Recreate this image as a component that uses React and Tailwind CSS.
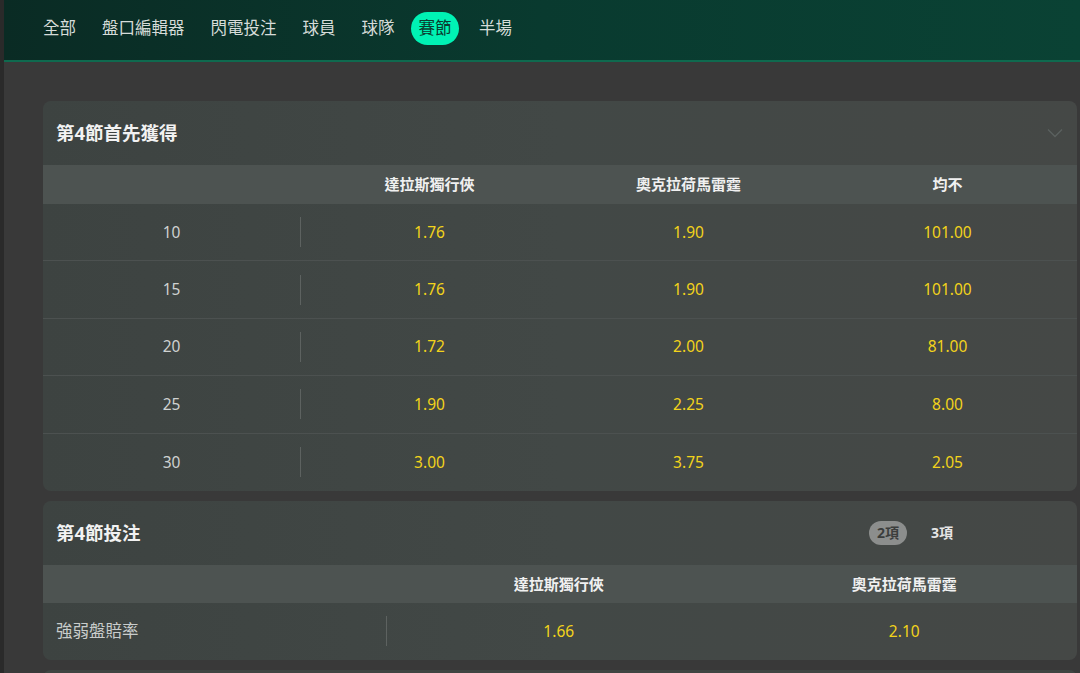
import React from 'react';

const tabs = ['全部', '盤口編輯器', '閃電投注', '球員', '球隊', '賽節', '半場'];

const firstRows = [
  ['10', '1.76', '1.90', '101.00'],
  ['15', '1.76', '1.90', '101.00'],
  ['20', '1.72', '2.00', '81.00'],
  ['25', '1.90', '2.25', '8.00'],
  ['30', '3.00', '3.75', '2.05'],
];

const ChevronDown = () => (
  <svg width="16" height="10" viewBox="0 0 16 10" fill="none" className="mr-[14px]">
    <path d="M1 1.5l7 7 7-7" stroke="#5b615f" strokeWidth="1.3" />
  </svg>
);

const Divider = () => <div className="absolute left-0 top-1/2 h-[30px] w-px -translate-y-1/2 bg-[#5d6260]" />;

const App = () => {
  return (
    <div
      className="flex h-[673px] w-[1080px] overflow-hidden bg-[#393939]"
      style={{ fontFamily: '"Noto Sans", "Noto Sans CJK TC", sans-serif' }}
    >
      <div className="w-[4px] shrink-0 bg-[#2a2a2a]" />
      <div className="flex flex-1 flex-col">
        {/* Header */}
        <div className="h-[62px] shrink-0 border-b-2 border-[#0f6a4f] bg-gradient-to-r from-[#0a2b24] via-[#093a2f] to-[#0a4234]">
          <div className="flex h-[57px] items-center gap-[26px] pl-[39px]">
            {tabs.map((t) => (
              <div
                key={t}
                className={
                  t === '賽節'
                    ? '-ml-[9.5px] -mr-[6px] flex h-[33px] items-center rounded-full bg-[#00f2b4] px-[7.5px] text-[16.5px] text-[#0b3b2f]'
                    : 'flex h-[33px] items-center text-[16.5px] text-[#d6dcd9]'
                }
              >
                {t}
              </div>
            ))}
          </div>
        </div>

        <div className="flex flex-col gap-[10px] pl-[39px] pr-[3px] pt-[39px]">
          {/* Card 1 */}
          <div className="overflow-hidden rounded-[8px] bg-gradient-to-r from-[#3d4341] via-[#424846] to-[#454846]">
            <div className="flex h-[64px] items-center justify-between pl-[13px]">
              <span className="text-[18.5px] font-bold text-[#f2f2f2]">第4節首先獲得</span>
              <ChevronDown />
            </div>
            <div className="grid h-[39px] grid-cols-[257px_1fr_1fr_1fr] items-center bg-[#4d5351] text-[15px] font-bold text-[#f0f0f0]">
              <div />
              <div className="text-center">達拉斯獨行俠</div>
              <div className="text-center">奧克拉荷馬雷霆</div>
              <div className="text-center">均不</div>
            </div>
            {firstRows.map((r, i) => (
              <div
                key={r[0]}
                className={
                  'grid h-[57.4px] grid-cols-[257px_1fr_1fr_1fr] items-center text-[15.5px] ' +
                  (i < firstRows.length - 1 ? 'border-b border-[#4c5150]' : '')
                }
              >
                <div className="text-center text-[#cfd2d1]">{r[0]}</div>
                <div className="relative flex h-full items-center justify-center text-[#f2d31b]">
                  <Divider />
                  {r[1]}
                </div>
                <div className="text-center text-[#f2d31b]">{r[2]}</div>
                <div className="text-center text-[#f2d31b]">{r[3]}</div>
              </div>
            ))}
          </div>

          {/* Card 2 */}
          <div className="overflow-hidden rounded-[8px] bg-gradient-to-r from-[#3d4341] via-[#424846] to-[#454846]">
            <div className="flex h-[64px] items-center justify-between pl-[13px] pr-[124px]">
              <span className="text-[18.5px] font-bold text-[#f2f2f2]">第4節投注</span>
              <div className="flex items-center gap-[24px] text-[14px] font-bold">
                <span className="flex h-[24px] items-center rounded-full bg-[#8c8e8d] px-[8px] text-[#3b3d3c]">2項</span>
                <span className="text-[#e6e6e6]">3項</span>
              </div>
            </div>
            <div className="grid h-[38px] grid-cols-[343px_1fr_1fr] items-center bg-[#4d5351] text-[15px] font-bold text-[#f0f0f0]">
              <div />
              <div className="text-center">達拉斯獨行俠</div>
              <div className="text-center">奧克拉荷馬雷霆</div>
            </div>
            <div className="grid h-[57px] grid-cols-[343px_1fr_1fr] items-center text-[15.5px]">
              <div className="pl-[13px] text-[16.5px] text-[#c9cccb]">強弱盤賠率</div>
              <div className="relative flex h-full items-center justify-center text-[#f2d31b]">
                <Divider />
                1.66
              </div>
              <div className="text-center text-[#f2d31b]">2.10</div>
            </div>
          </div>

          {/* Card 3 (cut off) */}
          <div className="h-[40px] rounded-t-[8px] bg-[#3f4542]" />
        </div>
      </div>
    </div>
  );
};

export default App;
